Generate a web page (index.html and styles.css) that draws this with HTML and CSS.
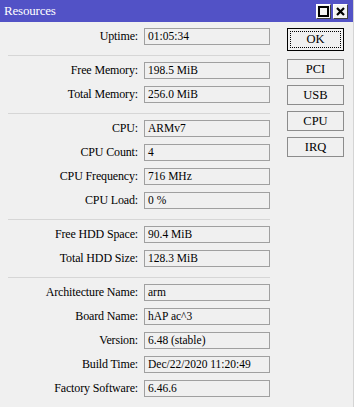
FILE: index.html
```html
<!DOCTYPE html>
<html lang="en">
<head>
    <meta charset="UTF-8">
    <title>Resources</title>
    <link rel="stylesheet" href="styles.css">
</head>
<body>
    <div class="window">
        <div class="titlebar">
            <span class="title">Resources</span>
            <div class="title-buttons">
                <span class="tbtn"><svg width="11" height="11" viewBox="0 0 11 11"><rect x="1" y="1" width="9" height="9" fill="none" stroke="#000" stroke-width="2"/></svg></span>
                <span class="tbtn"><svg width="11" height="11" viewBox="0 0 11 11"><path d="M2 2 L9 9 M9 2 L2 9" stroke="#000" stroke-width="2.2"/></svg></span>
            </div>
        </div>

        <div class="content">
            <div class="fields">
                <div class="group">
                    <label>Uptime:</label><div class="field">01:05:34</div>
                </div>
                <div class="sep"></div>
                <div class="group">
                    <label>Free Memory:</label><div class="field">198.5 MiB</div>
                    <label>Total Memory:</label><div class="field">256.0 MiB</div>
                </div>
                <div class="sep"></div>
                <div class="group">
                    <label>CPU:</label><div class="field">ARMv7</div>
                    <label>CPU Count:</label><div class="field">4</div>
                    <label>CPU Frequency:</label><div class="field">716 MHz</div>
                    <label>CPU Load:</label><div class="field">0 %</div>
                </div>
                <div class="sep"></div>
                <div class="group">
                    <label>Free HDD Space:</label><div class="field">90.4 MiB</div>
                    <label>Total HDD Size:</label><div class="field">128.3 MiB</div>
                </div>
                <div class="sep"></div>
                <div class="group">
                    <label>Architecture Name:</label><div class="field">arm</div>
                    <label>Board Name:</label><div class="field">hAP ac^3</div>
                    <label>Version:</label><div class="field">6.48 (stable)</div>
                    <label>Build Time:</label><div class="field">Dec/22/2020 11:20:49</div>
                    <label>Factory Software:</label><div class="field">6.46.6</div>
                </div>
            </div>

            <div class="buttons">
                <button class="btn ok"><span>OK</span></button>
                <button class="btn">PCI</button>
                <button class="btn">USB</button>
                <button class="btn">CPU</button>
                <button class="btn">IRQ</button>
            </div>
        </div>
    </div>
</body>
</html>
```

FILE: styles.css
```css
/* Ventana general */
body {
    margin: 0;
    background-color: #f0f0f0;
    font-family: "Liberation Serif", "DejaVu Serif", serif;
    font-size: 11.5px;
    color: #000;
}

.window {
    width: 354px;
    height: 407px;
    background-color: #f0f0f0;
    border-right: 1px solid #d4d4d4;
    box-sizing: border-box;
}

/* Barra de titulo */
.titlebar {
    height: 22px;
    background-color: #5252c6;
    display: flex;
    align-items: center;
    justify-content: space-between;
    padding: 0 5px 0 4px;
}

.title {
    color: #fff;
    font-size: 13px;
    letter-spacing: -0.2px;
}

.title-buttons {
    display: flex;
    gap: 2px;
}

.tbtn {
    width: 15px;
    height: 15px;
    background-color: #f4f4f4;
    border: 1px solid #fff;
    border-right-color: #404040;
    border-bottom-color: #404040;
    box-sizing: border-box;
    display: flex;
    align-items: center;
    justify-content: center;
}

/* Contenido */
.content {
    display: flex;
    padding-top: 6px;
}

.fields {
    width: 270px;
}

.group {
    display: grid;
    grid-template-columns: 138px 126px;
    column-gap: 6px;
    row-gap: 7px;
}

label {
    text-align: right;
    line-height: 17px;
    font-size: 12px;
    letter-spacing: -0.15px;
}

.field {
    height: 17px;
    line-height: 15px;
    border: 1px solid #a0a0a0;
    box-sizing: border-box;
    padding-left: 3px;
}

.sep {
    height: 1px;
    margin: 10px 0 6px 8px;
    background-color: #d6d6d6;
}

/* Botones */
.buttons {
    display: flex;
    flex-direction: column;
    gap: 6px;
    margin-left: 17px;
}

.btn {
    width: 57px;
    height: 20px;
    padding: 0;
    background-color: #f0f0f0;
    border: 1px solid #8c8c8c;
    font-family: "Liberation Serif", "DejaVu Serif", serif;
    font-size: 12.5px;
    color: #000;
}

.btn.ok {
    height: 23px;
    border: 1px solid #000;
    padding: 2px;
    margin-bottom: 2px;
}

.btn.ok span {
    display: flex;
    align-items: center;
    justify-content: center;
    height: 100%;
    border: 1px dotted #000;
    box-sizing: border-box;
}
```
